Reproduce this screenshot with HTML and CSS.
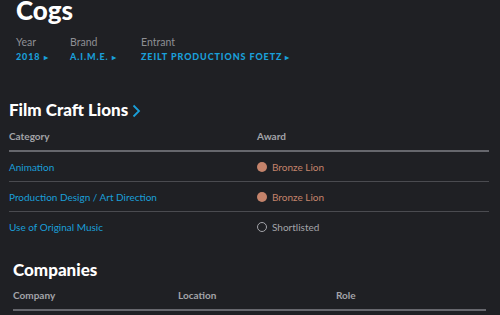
FILE: index.html
```html
<!DOCTYPE html>
<html>
    <head>
        <title>Cogs</title>
        <link rel="stylesheet" href="styles.css">
    </head>
    <body>
        <!-- Entry header -->
        <div class="entry">
            <h1 class="entry-title">Cogs</h1>
            <div class="meta">
                <div class="meta-item">
                    <span class="meta-label">Year</span>
                    <a class="meta-value">2018 <span class="caret">&#9656;</span></a>
                </div>
                <div class="meta-item">
                    <span class="meta-label">Brand</span>
                    <a class="meta-value">A.I.M.E. <span class="caret">&#9656;</span></a>
                </div>
                <div class="meta-item">
                    <span class="meta-label">Entrant</span>
                    <a class="meta-value">ZEILT PRODUCTIONS FOETZ <span class="caret">&#9656;</span></a>
                </div>
            </div>
        </div>

        <!-- Awards -->
        <div class="section awards">
            <h2 class="section-title">Film Craft Lions
                <svg class="chev" width="9" height="14" viewBox="0 0 9 14"><path d="M1.5 1.5 L7 7 L1.5 12.5" fill="none" stroke="#1a9fd9" stroke-width="1.8"/></svg>
            </h2>
            <div class="table">
                <div class="row head">
                    <span class="col-cat">Category</span>
                    <span>Award</span>
                </div>
                <div class="row">
                    <a class="col-cat">Animation</a>
                    <span class="award bronze"><i class="dot"></i>Bronze Lion</span>
                </div>
                <div class="row">
                    <a class="col-cat">Production Design / Art Direction</a>
                    <span class="award bronze"><i class="dot"></i>Bronze Lion</span>
                </div>
                <div class="row last">
                    <a class="col-cat">Use of Original Music</a>
                    <span class="award short"><i class="dot"></i>Shortlisted</span>
                </div>
            </div>
        </div>

        <!-- Companies -->
        <div class="section companies">
            <h2 class="section-title">Companies</h2>
            <div class="table">
                <div class="row head three">
                    <span>Company</span>
                    <span>Location</span>
                    <span>Role</span>
                </div>
            </div>
        </div>
    </body>
</html>
```

FILE: styles.css
```css
body {
    margin: 0;
    background-color: #1f2024;
    font-family: Lato, "Noto Sans", sans-serif;
    color: #ffffff;
    overflow: hidden;
}
a {
    color: #1a9fd9;
    text-decoration: none;
}
.entry {
    padding-left: 16px;
}
.entry-title {
    margin: 0;
    font-size: 26px;
    font-weight: 900;
    line-height: 20px;
}
.meta {
    display: flex;
    margin-top: 15px;
}
.meta-item {
    display: flex;
    flex-direction: column;
}
.meta-item:nth-child(1) { width: 54px; }
.meta-item:nth-child(2) { width: 71px; }
.meta-label {
    font-size: 10.5px;
    color: #8e8f94;
    line-height: 14px;
}
.meta-value {
    font-size: 9px;
    font-weight: 900;
    letter-spacing: 0.9px;
    line-height: 14px;
    margin-top: 1px;
}
.caret {
    font-size: 8px;
    letter-spacing: 0;
}
.section {
    padding-left: 9px;
    padding-right: 11px;
}
.awards {
    margin-top: 36px;
}
.section-title {
    margin: 0;
    font-size: 17px;
    font-weight: 900;
    line-height: 20px;
    display: flex;
    align-items: center;
    gap: 4px;
}
.chev {
    margin-top: 1px;
}
.table {
    margin-top: 2px;
}
.row {
    display: flex;
    align-items: center;
    height: 29px;
    font-size: 10px;
    border-bottom: 1px solid #4a4b50;
}
.row.head {
    height: 28px;
    color: #a3a4a9;
    font-weight: 700;
    border-bottom: 2px solid #66676d;
}
.row.last {
    border-bottom: none;
}
.col-cat {
    width: 248px;
}
.award {
    display: flex;
    align-items: center;
    gap: 5px;
}
.dot {
    width: 10px;
    height: 10px;
    border-radius: 50%;
    box-sizing: border-box;
}
.bronze {
    color: #c4836b;
}
.bronze .dot {
    background-color: #c4836b;
}
.short {
    color: #a3a4a9;
}
.short .dot {
    border: 1.5px solid #a3a4a9;
}
.companies {
    padding-left: 13px;
    padding-right: 14px;
    margin-top: 19px;
}
.companies .table {
    margin-top: 1px;
}
.row.three span:nth-child(1) { width: 165px; }
.row.three span:nth-child(2) { width: 158px; }
```
